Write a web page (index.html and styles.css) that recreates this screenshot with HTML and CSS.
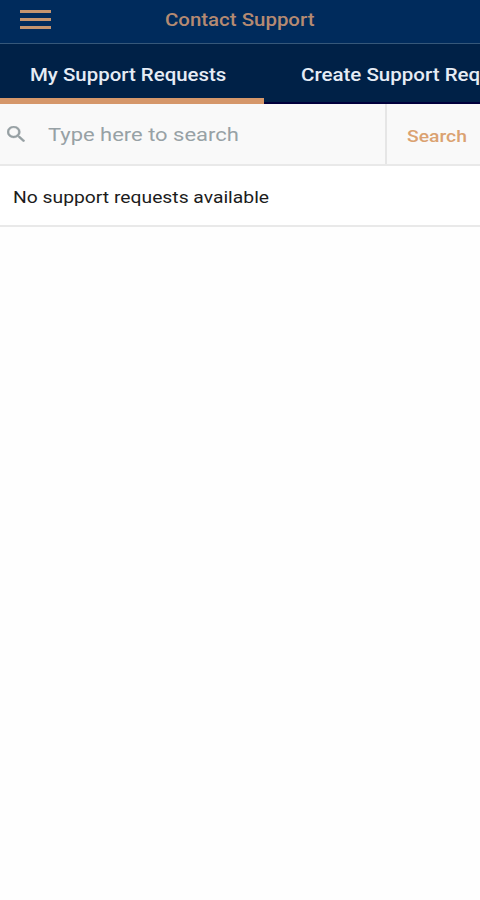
FILE: index.html
```html
<!DOCTYPE html>
<html lang="en">
<head>
    <meta charset="UTF-8">
    <meta name="viewport" content="width=device-width, initial-scale=1.0">
    <title>Contact Support</title>
    <link rel="stylesheet" href="styles.css">
</head>
<body>
    <header class="header">
        <button class="menu" aria-label="Menu">
            <span></span>
            <span></span>
            <span></span>
        </button>
        <h1 class="wide">Contact Support</h1>
    </header>

    <!-- Tabs -->
    <nav class="tabs">
        <a class="tab active"><span class="wide">My Support Requests</span></a>
        <a class="tab"><span class="wide">Create Support Request</span></a>
    </nav>

    <!-- Search -->
    <div class="search">
        <svg class="search-icon" viewBox="3 3 17.5 17.5" preserveAspectRatio="none">
            <path d="M15.5 14h-.79l-.28-.27A6.47 6.47 0 0 0 16 9.5 6.5 6.5 0 1 0 9.5 16c1.61 0 3.09-.59 4.23-1.57l.27.28v.79l5 4.99L20.49 19l-4.99-5zm-6 0a4.5 4.5 0 1 1 0-9 4.5 4.5 0 0 1 0 9z"/>
        </svg>
        <input type="text" class="search-input wide" placeholder="Type here to search">
        <button class="search-button"><span class="wide">Search</span></button>
    </div>

    <div class="empty"><span class="wide">No support requests available</span></div>
</body>
</html>
```

FILE: styles.css
```css
* {
    box-sizing: border-box;
}

body {
    margin: 0;
    background-color: #fefefe;
    font-family: Roboto, sans-serif;
    overflow-x: hidden;
}

button {
    border: none;
    background: none;
    padding: 0;
    font-family: inherit;
}

/* stretched lettering */
.wide {
    display: inline-block;
    transform: scaleX(1.135);
    transform-origin: left center;
    white-space: nowrap;
}

.header {
    display: flex;
    align-items: center;
    height: 44px;
    padding: 0 0 3px 20px;
    background-color: #002b5c;
    border-bottom: 1px solid #36587a;
}

.menu {
    display: flex;
    flex-direction: column;
    gap: 5px;
    width: 31px;
    margin-top: -1px;
}

.menu span {
    height: 3px;
    background-color: #c4946f;
}

.header h1 {
    margin: 0 0 0 114px;
    font-size: 18px;
    font-weight: 500;
    line-height: 24px;
    color: #b58a72;
}

.tabs {
    display: flex;
    height: 60px;
    background-color: #002147;
    overflow: hidden;
}

.tab {
    flex: 0 0 264px;
    padding-left: 30px;
    border-bottom: 2px solid #00003c;
    font-size: 18px;
    font-weight: 500;
    line-height: 61px;
    color: #e6ecf5;
}

.tab + .tab {
    padding-left: 37px;
}

.tab + .tab .wide {
    transform: scaleX(1.14);
}

.tab.active {
    border-bottom: 6px solid #d5976a;
}

.search {
    display: flex;
    align-items: center;
    height: 62px;
    background-color: #f9f9f9;
    border-bottom: 2px solid #e9e9e9;
}

.search-icon {
    flex: none;
    width: 18px;
    height: 16px;
    margin-left: 7px;
    fill: #96a0a3;
    stroke: #96a0a3;
    stroke-width: 0.4;
}

.search-input {
    width: 290px;
    margin: 0 47px 0 23px;
    padding: 0;
    border: none;
    outline: none;
    background: none;
    font-family: inherit;
    font-size: 19px;
    transform: scaleX(1.155);
}

.search-input::placeholder {
    color: #97a1a5;
}

.search-button {
    flex: 0 0 95px;
    height: 60px;
    padding: 3px 0 0 20px;
    border-left: 2px solid #e6e6e6;
    font-size: 17px;
    font-weight: 500;
    text-align: left;
    color: #dba271;
}

.empty {
    height: 61px;
    padding-left: 13px;
    background-color: #fff;
    border-bottom: 2px solid #e9e9e9;
    font-size: 17px;
    line-height: 63px;
    color: #1c1c1c;
}
```
